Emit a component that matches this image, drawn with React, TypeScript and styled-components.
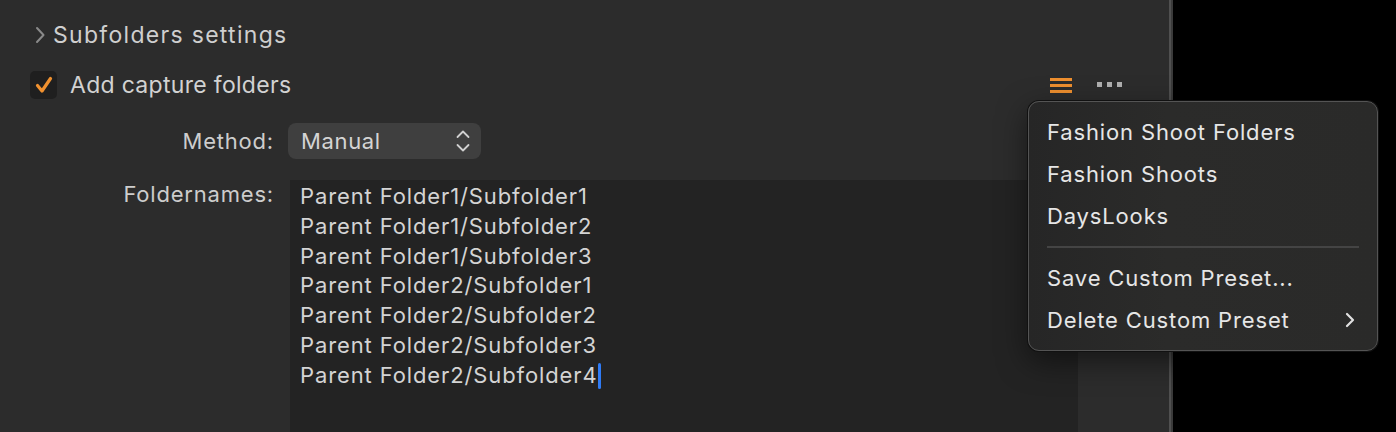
import React from "react";
import styled, { createGlobalStyle } from "styled-components";

const Global = createGlobalStyle`
  html, body { margin: 0; padding: 0; background: #000; }
  body { font-family: Inter, "Noto Sans", sans-serif; -webkit-font-smoothing: antialiased; }
`;

const Root = styled.div`
  position: relative;
  display: flex;
  width: 1396px;
  height: 432px;
  overflow: hidden;
  background: #000;
`;

const Panel = styled.div`
  width: 1169px;
  height: 432px;
  background: #2c2c2c;
  display: flex;
  flex-direction: column;
  box-sizing: border-box;
  padding: 19px 0 0 0;
`;

const Divider = styled.div`
  width: 4px;
  height: 432px;
  background: linear-gradient(to right, #505050 0 2px, #3a3a3a 2px 4px);
`;

const Disclosure = styled.div`
  display: flex;
  align-items: center;
  height: 32px;
  padding-left: 34px;
  gap: 7px;
  color: #cfcfcf;
  font-size: 23px;
  letter-spacing: 1.3px;
`;

const CheckRow = styled.div`
  display: flex;
  align-items: center;
  margin-top: 19px;
  height: 30px;
  padding-left: 30px;
  padding-right: 46px;
  color: #d2d2d2;
  font-size: 23px;
  letter-spacing: 0.3px;
`;

const CheckBox = styled.div`
  width: 27px;
  height: 28px;
  border-radius: 5px;
  background: #1f1f1f;
  display: flex;
  align-items: center;
  justify-content: center;
  margin-right: 13px;
`;

const Spacer = styled.div`
  flex: 1;
`;

const Tools = styled.div`
  display: flex;
  align-items: center;
  gap: 25px;
`;

const FieldRow = styled.div<{ $top: number; $grow?: boolean }>`
  display: flex;
  align-items: ${(p) => (p.$grow ? "flex-start" : "center")};
  margin-top: ${(p) => p.$top}px;
  ${(p) => (p.$grow ? "flex: 1;" : "")}
`;

const Label = styled.div<{ $pad?: number }>`
  width: 274px;
  text-align: right;
  color: #cdcdcd;
  font-size: 22px;
  letter-spacing: 0.8px;
  padding-top: ${(p) => p.$pad ?? 0}px;
  box-sizing: border-box;
  flex-shrink: 0;
`;

const Select = styled.div`
  margin-left: 14px;
  width: 193px;
  height: 36px;
  border-radius: 8px;
  background: #3f3f3f;
  display: flex;
  align-items: center;
  justify-content: space-between;
  box-sizing: border-box;
  padding: 0 10px 0 13px;
  color: #d4d4d4;
  font-size: 22px;
  letter-spacing: 0.65px;
`;

const TextArea = styled.div`
  margin-left: 16px;
  width: 788px;
  align-self: stretch;
  background: #232323;
  box-sizing: border-box;
  padding: 2px 0 0 10px;
  color: #d4d4d4;
  font-size: 22px;
  letter-spacing: 0.88px;
  line-height: 29.8px;
`;

const Line = styled.div`
  display: flex;
  align-items: center;
  white-space: pre;
`;

const Caret = styled.span`
  display: inline-block;
  width: 3px;
  height: 26px;
  border-radius: 1.5px;
  background: #2f7bf5;
`;

const Menu = styled.div`
  position: absolute;
  left: 1028px;
  top: 101px;
  width: 350px;
  height: 250px;
  box-sizing: border-box;
  border-radius: 11px;
  border: 1px solid #545454;
  box-shadow: 0 0 0 1px #111, 0 10px 30px rgba(0, 0, 0, 0.5);
  background: linear-gradient(to right, #262626, #2b2b2a 40%, #2a2a29);
  padding: 9px 0 0 0;
  display: flex;
  flex-direction: column;
`;

const MenuItem = styled.div`
  height: 42px;
  display: flex;
  align-items: center;
  justify-content: space-between;
  padding: 0 21px 0 18px;
  color: #e6e6e6;
  font-size: 22px;
  letter-spacing: 0.85px;
`;

const Separator = styled.div`
  height: 2px;
  background: #444;
  margin: 9px 18px 9px 18px;
`;

const Chevron = () => (
  <svg width="12" height="18" viewBox="0 0 12 18">
    <path d="M3 2 L9.5 9 L3 16" fill="none" stroke="#8a8a8a" strokeWidth="2" strokeLinecap="round" strokeLinejoin="round" />
  </svg>
);

const Check = () => (
  <svg width="20" height="20" viewBox="0 0 20 20">
    <path d="M3.5 10.5 L8 16 L16.5 3.5" fill="none" stroke="#f0912f" strokeWidth="3.2" strokeLinecap="round" strokeLinejoin="round" />
  </svg>
);

const Hamburger = () => (
  <svg width="22" height="15" viewBox="0 0 22 15">
    <rect x="0" y="0" width="22" height="3" fill="#ee8f2f" />
    <rect x="0" y="6" width="22" height="3" fill="#ee8f2f" />
    <rect x="0" y="12" width="22" height="3" fill="#ee8f2f" />
  </svg>
);

const Dots = () => (
  <svg width="26" height="6" viewBox="0 0 26 6">
    <rect x="0" y="0" width="5" height="5" fill="#b0b0b0" />
    <rect x="10" y="0" width="5" height="5" fill="#b0b0b0" />
    <rect x="20" y="0" width="5" height="5" fill="#b0b0b0" />
  </svg>
);

const UpDown = () => (
  <svg width="16" height="26" viewBox="0 0 16 26">
    <path d="M2.5 9 L8 3.5 L13.5 9" fill="none" stroke="#d0d0d0" strokeWidth="1.8" strokeLinecap="round" strokeLinejoin="round" />
    <path d="M2.5 17 L8 22.5 L13.5 17" fill="none" stroke="#d0d0d0" strokeWidth="1.8" strokeLinecap="round" strokeLinejoin="round" />
  </svg>
);

const SubChevron = () => (
  <svg width="12" height="18" viewBox="0 0 12 18">
    <path d="M3 3 L9 9 L3 15" fill="none" stroke="#e0e0e0" strokeWidth="2.2" strokeLinecap="round" strokeLinejoin="round" />
  </svg>
);

const folders = [
  "Parent Folder1/Subfolder1",
  "Parent Folder1/Subfolder2",
  "Parent Folder1/Subfolder3",
  "Parent Folder2/Subfolder1",
  "Parent Folder2/Subfolder2",
  "Parent Folder2/Subfolder3",
  "Parent Folder2/Subfolder4",
];

export default function App() {
  return (
    <>
      <Global />
      <Root>
        <Panel>
          <Disclosure>
            <Chevron />
            <span>Subfolders settings</span>
          </Disclosure>
          <CheckRow>
            <CheckBox>
              <Check />
            </CheckBox>
            <span>Add capture folders</span>
            <Spacer />
            <Tools>
              <Hamburger />
              <Dots />
            </Tools>
          </CheckRow>
          <FieldRow $top={23}>
            <Label>Method:</Label>
            <Select>
              <span>Manual</span>
              <UpDown />
            </Select>
          </FieldRow>
          <FieldRow $top={21} $grow>
            <Label $pad={1}>Foldernames:</Label>
            <TextArea>
              {folders.map((f, i) => (
                <Line key={f}>
                  {f}
                  {i === folders.length - 1 && <Caret />}
                </Line>
              ))}
            </TextArea>
          </FieldRow>
        </Panel>
        <Divider />
        <Menu>
          <MenuItem>Fashion Shoot Folders</MenuItem>
          <MenuItem>Fashion Shoots</MenuItem>
          <MenuItem>DaysLooks</MenuItem>
          <Separator />
          <MenuItem>Save Custom Preset...</MenuItem>
          <MenuItem>
            <span>Delete Custom Preset</span>
            <SubChevron />
          </MenuItem>
        </Menu>
      </Root>
    </>
  );
}
